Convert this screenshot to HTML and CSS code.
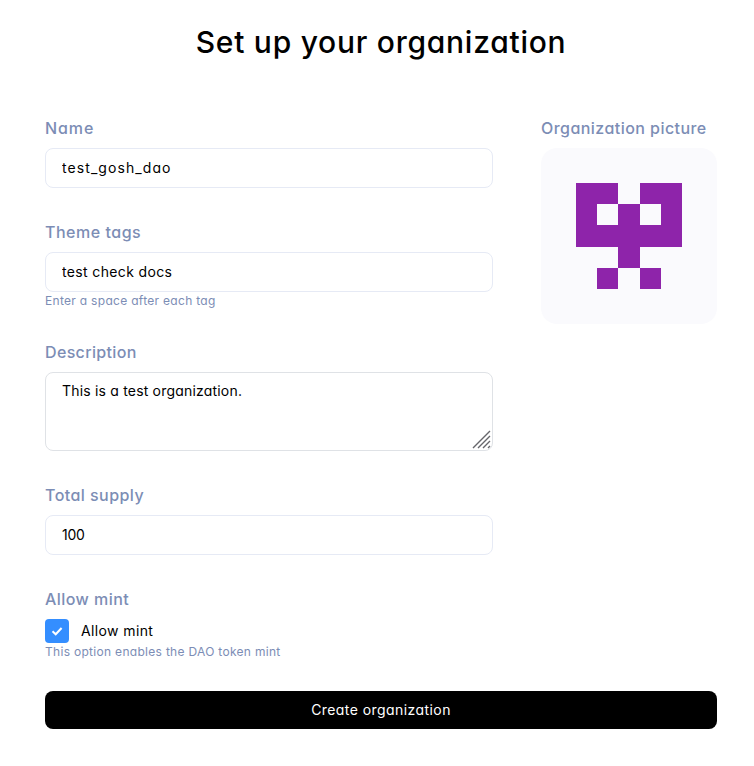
FILE: index.html
```html
<!DOCTYPE html>
<html lang="en">
<head>
<meta charset="utf-8">
<title>Set up your organization</title>
<link rel="stylesheet" href="styles.css">
</head>
<body>
<main class="page">
  <h1 class="title">Set up your organization</h1>
  <form class="form">
    <div class="columns">
      <div class="fields">
        <div class="field">
          <label class="label label-name" for="name">Name</label>
          <input class="control control-name" id="name" type="text" value="test_gosh_dao">
        </div>
        <div class="field">
          <label class="label label-tags" for="tags">Theme tags</label>
          <input class="control control-tags" id="tags" type="text" value="test check docs">
          <p class="hint">Enter a space after each tag</p>
        </div>
        <div class="field">
          <label class="label label-desc" for="desc">Description</label>
          <div class="area-wrap">
            <textarea class="control area" id="desc">This is a test organization.</textarea>
            <svg class="grip" width="19" height="19" viewBox="0 0 19 19" aria-hidden="true"><path d="M1 18 18 1M6 18 18 6M11 18l7-7M16 18l2-2"/></svg>
          </div>
        </div>
        <div class="field">
          <label class="label" for="supply">Total supply</label>
          <input class="control control-supply" id="supply" type="text" value="100">
        </div>
        <div class="field">
          <div class="label">Allow mint</div>
          <label class="check-row">
            <span class="check"><svg width="24" height="24" viewBox="0 0 24 24" aria-hidden="true"><path d="m7.5 12.3 3.2 3L16.6 9"/></svg></span>
            <span class="check-text">Allow mint</span>
          </label>
          <p class="hint">This option enables the DAO token mint</p>
        </div>
      </div>
      <div class="picture">
        <div class="label">Organization picture</div>
        <div class="avatar">
          <svg width="106" height="106" viewBox="0 0 106 106" shape-rendering="crispEdges" aria-hidden="true"><path d="M0 0h42v21h22V0h42v64H64v21H42V64H0zM21 21v21h21V21zM64 21v21h21V21zM21 85h21v21H21zM64 85h21v21H64z" fill-rule="evenodd"/></svg>
        </div>
      </div>
    </div>
    <button class="submit" type="button">Create organization</button>
  </form>
</main>
</body>
</html>
```

FILE: styles.css
```css
* { box-sizing: border-box; }

body {
  margin: 0;
  background: #fff;
  color: #000;
  font-family: Inter, "Open Sans", sans-serif;
  font-feature-settings: "cv11" 1;
}

.page {
  width: 672px;
  margin: 0 0 0 45px;
  padding-top: 24px;
}

.title {
  margin: 0 0 56px;
  font-size: 30px;
  font-weight: 500;
  line-height: 36px;
  letter-spacing: 0.74px;
  text-align: center;
}

.columns {
  display: grid;
  grid-template-columns: 448px 176px;
  gap: 48px;
}

.fields {
  display: flex;
  flex-direction: column;
  gap: 32px;
}

.label {
  display: block;
  width: max-content;
  margin-bottom: 8px;
  color: #7c8db5;
  font-size: 16px;
  font-weight: 500;
  line-height: 24px;
  letter-spacing: 0.45px;
  white-space: nowrap;
}

.label-name { letter-spacing: 0.9px; }
.label-tags { letter-spacing: 0.52px; }
.label-desc { letter-spacing: 0.35px; }

.control {
  display: block;
  width: 100%;
  height: 40px;
  padding: 0 16px 2px;
  border: 1px solid #e6eaf5;
  border-radius: 8px;
  outline: none;
  background: #fff;
  color: #000;
  font: inherit;
  font-feature-settings: inherit;
  font-size: 14px;
  line-height: 20px;
}

.control-name { letter-spacing: 1.08px; }
.control-tags { letter-spacing: 0.36px; }
.control-supply { letter-spacing: -0.3px; }

.area-wrap { position: relative; }

.area {
  height: 79px;
  padding: 8px 16px;
  border-color: #dfe2e6;
  letter-spacing: 0.19px;
  resize: none;
}

.grip {
  position: absolute;
  right: 2px;
  bottom: 2px;
  fill: none;
  stroke: #66666b;
  stroke-width: 1.4;
}

.hint {
  width: max-content;
  height: 16px;
  margin: 0;
  color: #7c8db5;
  font-size: 12px;
  line-height: 18px;
  letter-spacing: 0.3px;
}

.check-row {
  display: flex;
  align-items: center;
  gap: 12px;
  width: max-content;
  font-size: 14px;
  line-height: 24px;
  letter-spacing: 0.38px;
}

.check {
  width: 24px;
  height: 24px;
  border-radius: 4px;
  background: #348eff;
}

.check svg {
  display: block;
  fill: none;
  stroke: #fff;
  stroke-width: 2;
}

.avatar {
  display: grid;
  place-items: center;
  width: 176px;
  height: 176px;
  border-radius: 16px;
  background: #fafafd;
}

.avatar svg { fill: #8e24aa; }

.submit {
  display: block;
  width: 100%;
  height: 38px;
  margin-top: 32px;
  padding: 0 0 2px;
  border: 0;
  border-radius: 8px;
  background: #000;
  color: #fff;
  font: inherit;
  font-feature-settings: inherit;
  font-size: 14px;
  letter-spacing: 0.43px;
}
```
